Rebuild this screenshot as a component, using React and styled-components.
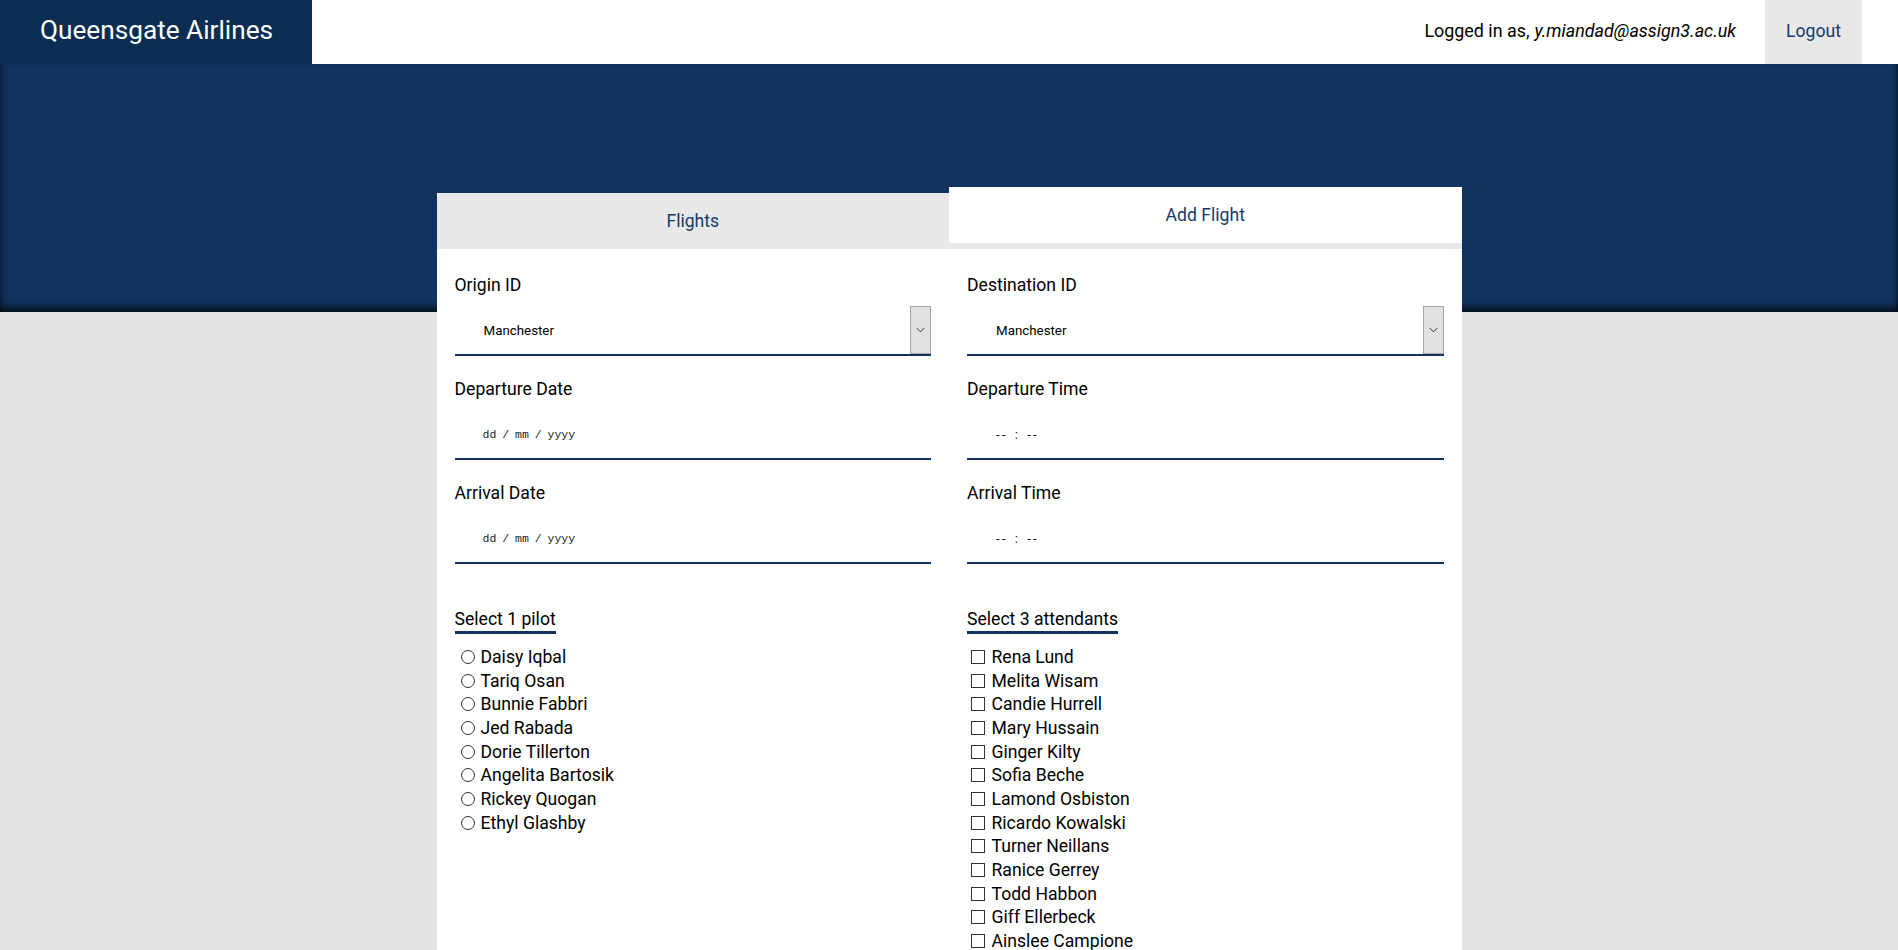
import React, { useState } from "react";
import styled, { createGlobalStyle } from "styled-components";

const pilots = [
  "Daisy Iqbal",
  "Tariq Osan",
  "Bunnie Fabbri",
  "Jed Rabada",
  "Dorie Tillerton",
  "Angelita Bartosik",
  "Rickey Quogan",
  "Ethyl Glashby",
];

const attendants = [
  "Rena Lund",
  "Melita Wisam",
  "Candie Hurrell",
  "Mary Hussain",
  "Ginger Kilty",
  "Sofia Beche",
  "Lamond Osbiston",
  "Ricardo Kowalski",
  "Turner Neillans",
  "Ranice Gerrey",
  "Todd Habbon",
  "Giff Ellerbeck",
  "Ainslee Campione",
];

const airports = ["Manchester", "London Heathrow", "Edinburgh", "Bristol"];

const App = () => {
  const [tab, setTab] = useState("add");
  const [origin, setOrigin] = useState("Manchester");
  const [destination, setDestination] = useState("Manchester");
  const [pilot, setPilot] = useState(null);
  const [crew, setCrew] = useState([]);

  const toggleCrew = (name) => {
    setCrew((prev) =>
      prev.includes(name) ? prev.filter((n) => n !== name) : [...prev, name]
    );
  };

  return (
    <>
      <GlobalStyle />
      <Header>
        <Brand>Queensgate Airlines</Brand>
        <UserArea>
          <UserText>
            Logged in as, <em>y.miandad@assign3.ac.uk</em>
          </UserText>
          <LogoutButton>Logout</LogoutButton>
        </UserArea>
      </Header>

      <Hero />

      <Card>
        <TabRow>
          <Tab active={tab === "flights"} onClick={() => setTab("flights")}>
            Flights
          </Tab>
          <Tab active={tab === "add"} onClick={() => setTab("add")}>
            Add Flight
          </Tab>
        </TabRow>

        <FormGrid>
          <Column>
            <Field>
              <Label>Origin ID</Label>
              <SelectWrap>
                <Select value={origin} onChange={(e) => setOrigin(e.target.value)}>
                  {airports.map((a) => (
                    <option key={a}>{a}</option>
                  ))}
                </Select>
                <ArrowBox>
                  <Chevron />
                </ArrowBox>
              </SelectWrap>
            </Field>
            <Field>
              <Label>Departure Date</Label>
              <InputBox>
                <DateText>dd / mm / yyyy</DateText>
              </InputBox>
            </Field>
            <Field>
              <Label>Arrival Date</Label>
              <InputBox>
                <DateText>dd / mm / yyyy</DateText>
              </InputBox>
            </Field>

            <Section>
              <SectionTitle>Select 1 pilot</SectionTitle>
              <OptionList>
                {pilots.map((p) => (
                  <Option key={p}>
                    <Radio
                      type="radio"
                      name="pilot"
                      checked={pilot === p}
                      onChange={() => setPilot(p)}
                    />
                    {p}
                  </Option>
                ))}
              </OptionList>
            </Section>
          </Column>

          <Column>
            <Field>
              <Label>Destination ID</Label>
              <SelectWrap>
                <Select
                  value={destination}
                  onChange={(e) => setDestination(e.target.value)}
                >
                  {airports.map((a) => (
                    <option key={a}>{a}</option>
                  ))}
                </Select>
                <ArrowBox>
                  <Chevron />
                </ArrowBox>
              </SelectWrap>
            </Field>
            <Field>
              <Label>Departure Time</Label>
              <InputBox>
                <TimeText>-- : --</TimeText>
              </InputBox>
            </Field>
            <Field>
              <Label>Arrival Time</Label>
              <InputBox>
                <TimeText>-- : --</TimeText>
              </InputBox>
            </Field>

            <Section>
              <SectionTitle>Select 3 attendants</SectionTitle>
              <OptionList>
                {attendants.map((a) => (
                  <Option key={a}>
                    <Checkbox
                      type="checkbox"
                      checked={crew.includes(a)}
                      onChange={() => toggleCrew(a)}
                    />
                    {a}
                  </Option>
                ))}
              </OptionList>
            </Section>
          </Column>
        </FormGrid>
      </Card>
    </>
  );
};

const Chevron = () => (
  <svg width="9" height="6" viewBox="0 0 9 6">
    <path d="M0.5 0.8 L4.5 4.8 L8.5 0.8" fill="none" stroke="#333" strokeWidth="1" />
  </svg>
);

export default App;

// ===== STYLES =====

const GlobalStyle = createGlobalStyle`
  body {
    margin: 0;
    background: #e4e4e4;
    font-family: Roboto, "Liberation Sans", Arial, sans-serif;
    color: #111;
  }
`;

const Header = styled.header`
  display: flex;
  justify-content: space-between;
  align-items: stretch;
  height: 64px;
  background: #fff;
`;

const Brand = styled.div`
  display: flex;
  align-items: center;
  padding: 0 39px 4px 40px;
  background: #0c2d52;
  color: #fff;
  font-size: 26.2px;
`;

const UserArea = styled.div`
  display: flex;
  align-items: stretch;
  gap: 29px;
  margin-right: 36px;
`;

const UserText = styled.div`
  display: flex;
  align-items: center;
  font-size: 17.9px;
  color: #000;
  padding-bottom: 3px;

  em {
    margin-left: 5px;
  }
`;

const LogoutButton = styled.button`
  border: none;
  background: #e8e8e8;
  color: #163a6b;
  font-family: inherit;
  font-size: 17.6px;
  padding: 0 21px 3px;
  cursor: pointer;
`;

const Hero = styled.div`
  height: 248px;
  background: #11345f;
  box-shadow: inset 0 -9px 8px -4px rgba(0, 0, 0, 0.7),
    inset 6px 0 6px -5px rgba(0, 0, 0, 0.5),
    inset -6px 0 6px -5px rgba(0, 0, 0, 0.5);
`;

const Card = styled.main`
  position: relative;
  width: 1025px;
  margin: -119px auto 0;
  background: #fff;
  padding-bottom: 60px;
`;

const TabRow = styled.div`
  display: grid;
  grid-template-columns: 1fr 1fr;
  height: 56px;
  background: #e9e9e9;
`;

const Tab = styled.button`
  border: none;
  font-family: inherit;
  font-size: 17.6px;
  color: #173a68;
  cursor: pointer;
  background: ${({ active }) => (active ? "#fff" : "#e9e9e9")};
  transform: ${({ active }) => (active ? "translateY(-6px)" : "none")};
`;

const FormGrid = styled.div`
  display: grid;
  grid-template-columns: 1fr 1fr;
  column-gap: 36px;
  padding: 26px 18px 0;
`;

const Column = styled.div`
  display: flex;
  flex-direction: column;
`;

const Field = styled.div`
  margin-bottom: 23px;
`;

const Label = styled.label`
  display: block;
  font-size: 17.6px;
  color: #000;
  margin-bottom: 11px;
`;

const SelectWrap = styled.div`
  display: flex;
  height: 48px;
  border-bottom: 2px solid #12335e;
`;

const Select = styled.select`
  flex: 1;
  appearance: none;
  border: none;
  background: transparent;
  font-family: Roboto, sans-serif;
  font-size: 13.33px;
  color: #000;
  padding: 0 0 0 29px;
  outline: none;
`;

const ArrowBox = styled.div`
  width: 19px;
  height: 46px;
  display: flex;
  align-items: center;
  justify-content: center;
  background: #e1e1e1;
  border: 1px solid #a6a6a6;
`;

const InputBox = styled.div`
  display: flex;
  align-items: center;
  height: 48px;
  border-bottom: 2px solid #12335e;
`;

const DateText = styled.span`
  font-family: "Liberation Mono", "Courier New", monospace;
  font-size: 11.5px;
  color: #222;
  padding-left: 28px;
  word-spacing: -1px;
`;

const TimeText = styled.span`
  font-family: Roboto, sans-serif;
  font-size: 13.33px;
  color: #222;
  padding-left: 29px;
  letter-spacing: 2px;
  word-spacing: 2px;
`;

const Section = styled.div`
  margin-top: 22px;
`;

const SectionTitle = styled.div`
  display: inline-block;
  font-size: 17.6px;
  color: #000;
  padding-bottom: 2px;
  border-bottom: 3px solid #12335e;
`;

const OptionList = styled.div`
  margin-top: 11px;
`;

const Option = styled.label`
  display: flex;
  align-items: center;
  height: 23.7px;
  font-size: 17.6px;
  color: #000;
`;

const Radio = styled.input`
  appearance: none;
  width: 14px;
  height: 14px;
  margin: 0 6px 0 6px;
  border: 1px solid #333;
  border-radius: 50%;
  background: #fff;

  &:checked {
    background: radial-gradient(circle, #333 0 3px, #fff 3.5px);
  }
`;

const Checkbox = styled.input`
  appearance: none;
  width: 14px;
  height: 14px;
  margin: 0 6.5px 0 4px;
  border: 1px solid #333;
  border-radius: 0;
  background: #fff;

  &:checked {
    background: #12335e;
  }
`;
